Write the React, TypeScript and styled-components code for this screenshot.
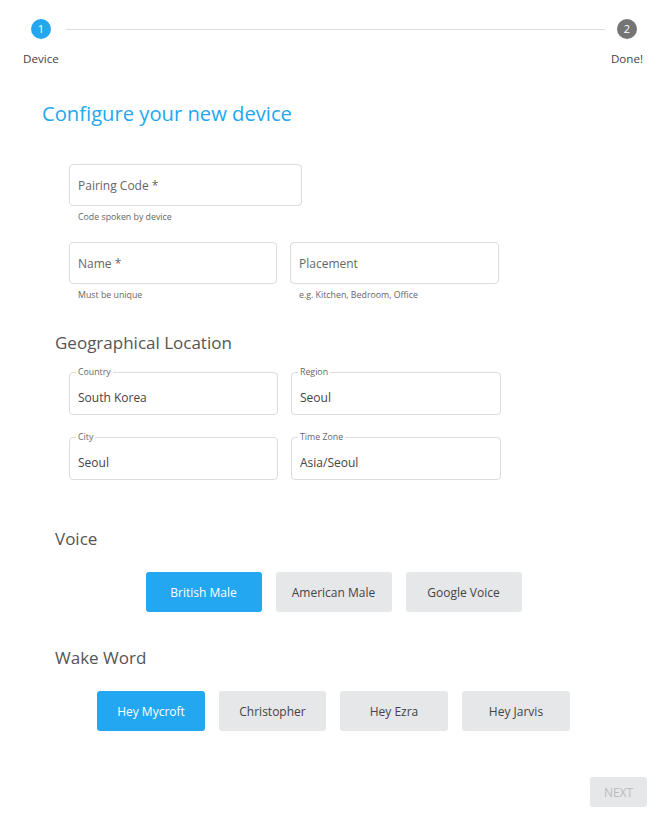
import React from 'react';
import styled, { createGlobalStyle } from 'styled-components';

const BLUE = '#23a7f1';

const GlobalStyle = createGlobalStyle`
  body {
    margin: 0;
    background: #fff;
    font-family: "Open Sans", "Noto Sans", sans-serif;
    color: #444;
  }
`;

const voices = ['British Male', 'American Male', 'Google Voice'];
const wakeWords = [
  { label: 'Hey Mycroft', width: 108 },
  { label: 'Christopher', width: 107 },
  { label: 'Hey Ezra', width: 108 },
  { label: 'Hey Jarvis', width: 108 },
];

const App = () => {
  return (
    <Page>
      <GlobalStyle />
      <Stepper>
        <Step>
          <Circle active>1</Circle>
          <StepLabel>Device</StepLabel>
        </Step>
        <Connector />
        <Step>
          <Circle>2</Circle>
          <StepLabel>Done!</StepLabel>
        </Step>
      </Stepper>

      <Title>Configure your new device</Title>

      <Fields top={37}>
        <Field width={233}>
          <Input placeholder="Pairing Code *" />
          <Helper>Code spoken by device</Helper>
        </Field>
        <Row>
          <Field width={208}>
            <Input placeholder="Name *" />
            <Helper>Must be unique</Helper>
          </Field>
          <Field width={209}>
            <Input placeholder="Placement" />
            <Helper>e.g. Kitchen, Bedroom, Office</Helper>
          </Field>
        </Row>
      </Fields>

      <Heading top={30}>Geographical Location</Heading>
      <Fields top={17}>
        <LocationGrid>
          <Outlined>
            <Legend>Country</Legend>
            <Value>South Korea</Value>
          </Outlined>
          <Outlined>
            <Legend>Region</Legend>
            <Value>Seoul</Value>
          </Outlined>
          <Outlined>
            <Legend>City</Legend>
            <Value>Seoul</Value>
          </Outlined>
          <Outlined>
            <Legend>Time Zone</Legend>
            <Value>Asia/Seoul</Value>
          </Outlined>
        </LocationGrid>
      </Fields>

      <Heading top={47}>Voice</Heading>
      <Choices>
        {voices.map((v, i) => (
          <Choice key={v} selected={i === 0} w={116}>
            {v}
          </Choice>
        ))}
      </Choices>

      <Heading top={34}>Wake Word</Heading>
      <Choices>
        {wakeWords.map((w, i) => (
          <Choice key={w.label} selected={i === 0} w={w.width}>
            {w.label}
          </Choice>
        ))}
      </Choices>

      <Footer>
        <NextButton disabled>NEXT</NextButton>
      </Footer>
    </Page>
  );
};

export default App;

const Page = styled.div`
  width: 665px;
  min-height: 824px;
  box-sizing: border-box;
  padding-top: 19px;
`;

const Stepper = styled.div`
  display: flex;
  align-items: flex-start;
  padding: 0 22px 0 23px;
`;

const Step = styled.div`
  display: flex;
  flex-direction: column;
  align-items: center;
`;

const Circle = styled.div<{ active?: boolean }>`
  width: 20px;
  height: 20px;
  border-radius: 50%;
  background: ${(p) => (p.active ? BLUE : '#757575')};
  color: #fff;
  font-size: 11px;
  line-height: 20px;
  text-align: center;
`;

const StepLabel = styled.div`
  margin-top: 12px;
  font-size: 11.6px;
  line-height: 16px;
  color: #444;
`;

const Connector = styled.div`
  flex: 1;
  height: 1px;
  background: #dedede;
  margin: 10px 6px 0 7px;
`;

const Title = styled.h1`
  margin: 32px 0 0 42px;
  font-size: 20.2px;
  line-height: 28px;
  font-weight: 400;
  color: ${BLUE};
`;

const Fields = styled.div<{ top: number }>`
  padding-left: 69px;
  margin-top: ${(p) => p.top}px;
`;

const Row = styled.div`
  display: flex;
  gap: 13px;
  margin-top: 19px;
`;

const Field = styled.div<{ width: number }>`
  width: ${(p) => p.width}px;
`;

const Input = styled.input`
  display: block;
  width: 100%;
  height: 42px;
  box-sizing: border-box;
  border: 1px solid #dcdcdc;
  border-radius: 4px;
  padding: 0 8px;
  font-family: inherit;
  font-size: 12px;
  color: #444;
  outline: none;
  &::placeholder {
    color: #666;
  }
`;

const Helper = styled.div`
  margin: 5px 0 0 9px;
  font-size: 8.8px;
  line-height: 12px;
  color: #666;
`;

const Heading = styled.h2<{ top: number }>`
  margin: ${(p) => p.top}px 0 0 55px;
  font-size: 17px;
  line-height: 24px;
  font-weight: 400;
  color: #555;
`;

const LocationGrid = styled.div`
  display: grid;
  grid-template-columns: 209px 210px;
  column-gap: 13px;
  row-gap: 22px;
`;

const Outlined = styled.div`
  position: relative;
  height: 43px;
  box-sizing: border-box;
  border: 1px solid #dcdcdc;
  border-radius: 4px;
  display: flex;
  align-items: center;
  padding: 7px 8px 0;
`;

const Legend = styled.span`
  position: absolute;
  top: -7px;
  left: 6px;
  padding: 0 2px;
  background: #fff;
  font-size: 8.8px;
  line-height: 12px;
  color: #666;
`;

const Value = styled.span`
  font-size: 12px;
  color: #444;
`;

const Choices = styled.div`
  display: flex;
  justify-content: center;
  gap: 14px;
  margin-top: 21px;
  padding-left: 2px;
`;

const Choice = styled.button<{ selected?: boolean; w: number }>`
  width: ${(p) => p.w}px;
  height: 40px;
  border: none;
  border-radius: 3px;
  background: ${(p) => (p.selected ? BLUE : '#e6e7e8')};
  color: ${(p) => (p.selected ? '#fff' : '#444')};
  font-family: inherit;
  font-size: 12px;
  cursor: pointer;
`;

const Footer = styled.div`
  display: flex;
  justify-content: flex-end;
  margin-top: 46px;
  padding-right: 18px;
`;

const NextButton = styled.button`
  width: 57px;
  height: 30px;
  border: none;
  border-radius: 3px;
  background: #e6e7e8;
  color: #b9bcc0;
  font-family: inherit;
  font-size: 12px;
`;
